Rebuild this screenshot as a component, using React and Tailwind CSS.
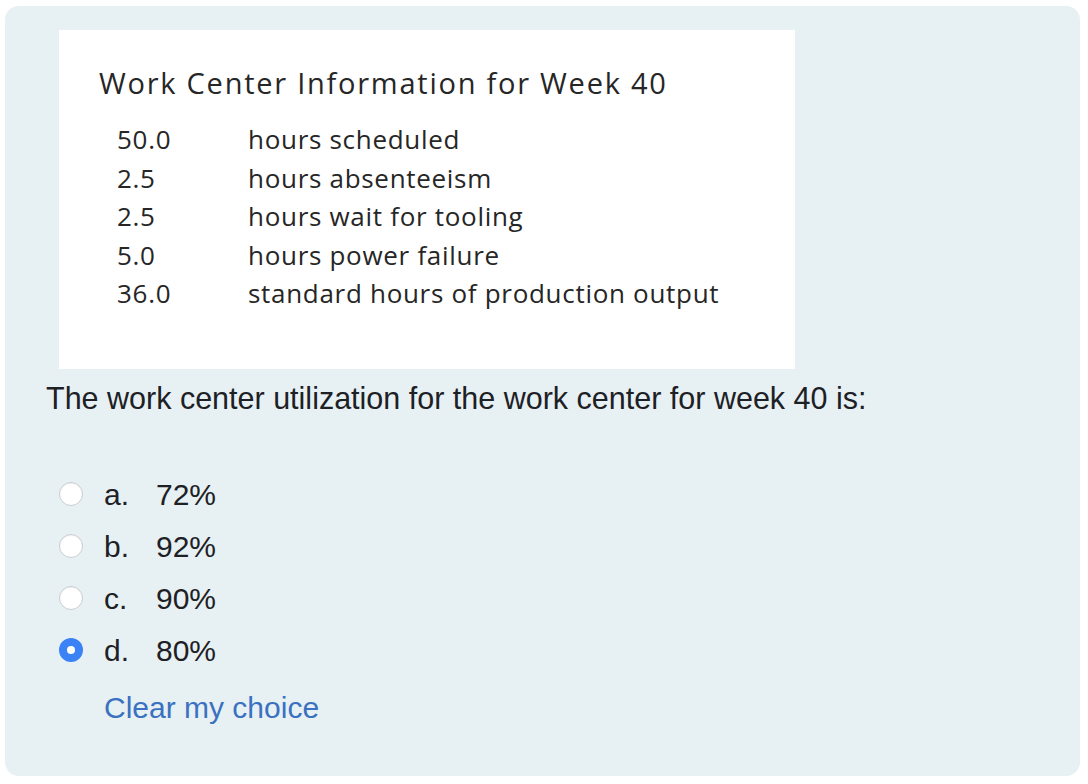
import React, { useState } from 'react';

const rows = [
  ['50.0', 'hours scheduled'],
  ['2.5', 'hours absenteeism'],
  ['2.5', 'hours wait for tooling'],
  ['5.0', 'hours power failure'],
  ['36.0', 'standard hours of production output'],
];

const options = [
  ['a.', '72%'],
  ['b.', '92%'],
  ['c.', '90%'],
  ['d.', '80%'],
];

const Radio = ({ checked }) =>
  checked ? (
    <span className="w-6 h-6 rounded-full bg-[#3b82f6] flex items-center justify-center shrink-0">
      <span className="w-2 h-2 rounded-full bg-white" />
    </span>
  ) : (
    <span className="w-6 h-6 rounded-full bg-white border border-[#c9cdd1] shadow-[inset_0_1px_1px_rgba(0,0,0,0.06)] shrink-0" />
  );

export default function App() {
  const [choice, setChoice] = useState(3);

  return (
    <div className="w-[1088px] h-[784px] bg-white pt-[6px] pl-[5px]">
      <div className="w-[1075px] h-[770px] bg-[#e7f0f3] rounded-[14px] pt-6 pl-[54px] font-['Liberation_Sans',Arial,sans-serif] text-[#1d2125]">
        <div className="w-[736px] h-[339px] bg-white pt-[33px] pl-[40px] font-['Open_Sans',sans-serif] text-[#262626]">
          <h2 className="text-[29px] leading-[40px] tracking-[1.75px]">Work Center Information for Week 40</h2>
          <div className="mt-[17px] pl-[18px] text-[26px] leading-[38.5px] tracking-[0.7px]">
            {rows.map(([n, t], i) => (
              <div key={i} className="flex">
                <span className="w-[131px]">{n}</span>
                <span>{t}</span>
              </div>
            ))}
          </div>
        </div>

        <p className="-ml-[13px] mt-[12px] text-[30.5px] leading-[34px]">
          The work center utilization for the work center for week 40 is:
        </p>

        <div className="mt-[53px] flex flex-col">
          {options.map(([l, v], i) => (
            <label key={i} className="flex items-center h-[52px] text-[30px] cursor-pointer" onClick={() => setChoice(i)}>
              <Radio checked={choice === i} />
              <span className="ml-[21px] w-[52px]">{l}</span>
              <span>{v}</span>
            </label>
          ))}
        </div>

        <button className="ml-[45px] mt-[15px] text-[30px] leading-[34px] text-[#3a71c1]" onClick={() => setChoice(null)}>
          Clear my choice
        </button>
      </div>
    </div>
  );
}
